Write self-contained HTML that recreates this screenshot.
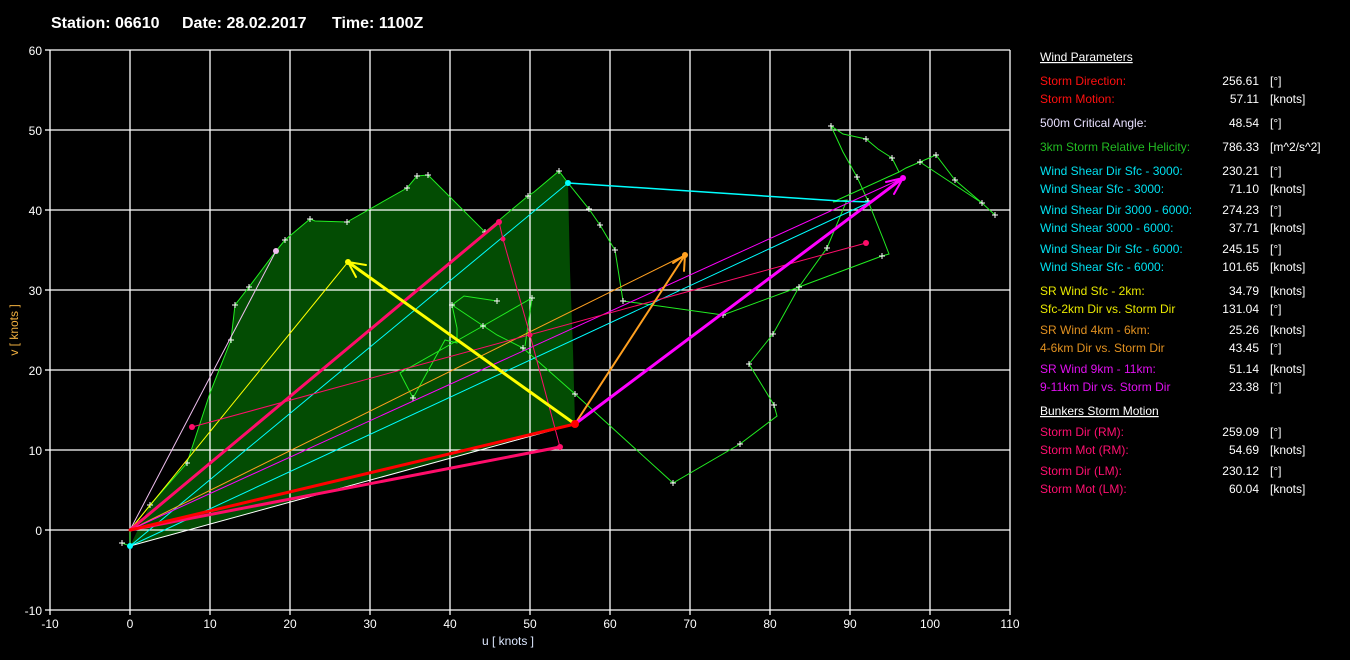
<!DOCTYPE html>
<html><head><meta charset="utf-8"><style>
html,body{margin:0;padding:0;background:#000;width:1350px;height:660px;overflow:hidden}
svg{display:block}
.lg{font-family:"Liberation Sans",sans-serif;font-size:12px}
</style></head><body>
<svg width="1350" height="660" viewBox="0 0 1350 660" xmlns="http://www.w3.org/2000/svg">
<rect width="1350" height="660" fill="#000"/>
<text x="51" y="28" fill="#fff" font-family="Liberation Sans,sans-serif" font-weight="bold" font-size="16">Station: 06610</text>
<text x="182" y="28" fill="#fff" font-family="Liberation Sans,sans-serif" font-weight="bold" font-size="16">Date: 28.02.2017</text>
<text x="332" y="28" fill="#fff" font-family="Liberation Sans,sans-serif" font-weight="bold" font-size="16">Time: 1100Z</text>

<!-- helicity fill -->
<polygon fill="#034c03" points="130,546 150,505 187,463 210,393 231,340 235,305 249,287 276,251 285,240 310,219 315,221 347,222 407,188 417,176 428,175 434,181 485,232 528,196 534,192 559,171 568,183 570,270 573,350 575,424"/>

<!-- grid -->
<g stroke="#fff" stroke-width="1.3">
<line x1="50" y1="50" x2="1010" y2="50"/><line x1="50" y1="130" x2="1010" y2="130"/><line x1="50" y1="210" x2="1010" y2="210"/><line x1="50" y1="290" x2="1010" y2="290"/><line x1="50" y1="370" x2="1010" y2="370"/><line x1="50" y1="450" x2="1010" y2="450"/><line x1="50" y1="530" x2="1010" y2="530"/><line x1="45" y1="610" x2="1010" y2="610"/>
<line x1="50" y1="50" x2="50" y2="615"/><line x1="130" y1="50" x2="130" y2="615"/><line x1="210" y1="50" x2="210" y2="615"/><line x1="290" y1="50" x2="290" y2="615"/><line x1="370" y1="50" x2="370" y2="615"/><line x1="450" y1="50" x2="450" y2="615"/><line x1="530" y1="50" x2="530" y2="615"/><line x1="610" y1="50" x2="610" y2="615"/><line x1="690" y1="50" x2="690" y2="615"/><line x1="770" y1="50" x2="770" y2="615"/><line x1="850" y1="50" x2="850" y2="615"/><line x1="930" y1="50" x2="930" y2="615"/><line x1="1010" y1="50" x2="1010" y2="615"/>
<line x1="45" y1="50" x2="50" y2="50"/><line x1="45" y1="130" x2="50" y2="130"/><line x1="45" y1="210" x2="50" y2="210"/><line x1="45" y1="290" x2="50" y2="290"/><line x1="45" y1="370" x2="50" y2="370"/><line x1="45" y1="450" x2="50" y2="450"/><line x1="45" y1="530" x2="50" y2="530"/>
</g>
<g fill="#fff" font-family="Liberation Sans,sans-serif" font-size="12" text-anchor="end">
<text x="42" y="55">60</text><text x="42" y="135">50</text><text x="42" y="215">40</text><text x="42" y="295">30</text><text x="42" y="375">20</text><text x="42" y="455">10</text><text x="42" y="535">0</text><text x="42" y="615">-10</text>
</g>
<g fill="#fff" font-family="Liberation Sans,sans-serif" font-size="12" text-anchor="middle">
<text x="50" y="628">-10</text><text x="130" y="628">0</text><text x="210" y="628">10</text><text x="290" y="628">20</text><text x="370" y="628">30</text><text x="450" y="628">40</text><text x="530" y="628">50</text><text x="610" y="628">60</text><text x="690" y="628">70</text><text x="770" y="628">80</text><text x="850" y="628">90</text><text x="930" y="628">100</text><text x="1010" y="628">110</text>
<text x="508" y="645" fill="#dde8ff">u  [ knots ]</text>
</g>
<text transform="translate(18,330) rotate(-90)" fill="#f0b040" font-family="Liberation Sans,sans-serif" font-size="12" text-anchor="middle">v  [ knots ]</text>

<!-- green hodograph -->
<g fill="none" stroke="#22ee22" stroke-width="1">
<polyline points="122,543 130,546 130,530 150,505 187,463 210,393 231,340 235,305 249,287 276,251 285,240 310,219 315,221 347,222 407,188 417,176 428,175 434,181 485,232 528,196 534,192 559,171 568,183 589,209 600,225 610,242 615,250 623,301 723,315 799,287 882,256 889,254 884,241 868,201 857,177 843,152 831,126 843,134 866,139 878,149 892,158 899,172 906,168 920,162 936,155 955,180 982,203 995,215"/>
<polyline points="920,162 982,203"/>
<polyline points="899,172 833,202 847,200 827,248 799,287 773,334 749,364 774,405 777,416 740,444 673,483 575,394 523,348 497,335 452,305 464,296 497,301"/>
<polyline points="452,305 457,328 457,343 445,340 413,398 400,373 483,326 532,298 525,346"/>
</g>
<g stroke="#fff" stroke-width="1" fill="none">
<path d="M119,543h6M122,540v6M147,505h6M150,502v6M184,463h6M187,460v6M228,340h6M231,337v6M232,305h6M235,302v6M246,287h6M249,284v6M282,240h6M285,237v6M307,219h6M310,216v6M344,222h6M347,219v6M404,188h6M407,185v6M414,176h6M417,173v6M425,175h6M428,172v6M482,232h6M485,229v6M525,196h6M528,193v6M556,171h6M559,168v6M586,209h6M589,206v6M597,225h6M600,222v6M612,250h6M615,247v6M620,301h6M623,298v6M720,315h6M723,312v6M796,287h6M799,284v6M879,256h6M882,253v6M865,201h6M868,198v6M854,177h6M857,174v6M828,126h6M831,123v6M863,139h6M866,136v6M889,158h6M892,155v6M917,162h6M920,159v6M933,155h6M936,152v6M952,180h6M955,177v6M979,203h6M982,200v6M992,215h6M995,212v6M770,334h6M773,331v6M746,364h6M749,361v6M771,405h6M774,402v6M737,444h6M740,441v6M670,483h6M673,480v6M572,394h6M575,391v6M520,348h6M523,345v6M449,305h6M452,302v6M494,301h6M497,298v6M410,398h6M413,395v6M480,326h6M483,323v6M529,298h6M532,295v6M824,248h6M827,245v6"/>
</g>

<!-- thin lines -->
<g fill="none" stroke-width="1">
<line x1="130" y1="546" x2="575" y2="424" stroke="#fff"/>
<line x1="130" y1="530" x2="276" y2="251" stroke="#f0c0f0"/>
<line x1="130" y1="530" x2="348" y2="262" stroke="#ffff00"/>
<line x1="130" y1="546" x2="568" y2="183" stroke="#00ffff"/>
<line x1="130" y1="546" x2="870" y2="202" stroke="#00ffff"/>
<polyline points="568,183 840,201 870,202" stroke="#00ffff" stroke-width="1.5"/>
<line x1="130" y1="530" x2="685" y2="255" stroke="#ffa020"/>
<line x1="130" y1="530" x2="903" y2="178" stroke="#ff00ff"/>
<line x1="192" y1="427" x2="866" y2="243" stroke="#ff0d6a"/>
<polyline points="499,222 503,239 530,335 560,447" stroke="#ff0d6a"/>
</g>
<!-- thick lines -->
<g fill="none" stroke-linecap="round">
<line x1="130" y1="530" x2="560" y2="447" stroke="#ff0d6a" stroke-width="3"/>
<line x1="130" y1="530" x2="499" y2="222" stroke="#ff0d6a" stroke-width="3"/>
<line x1="130" y1="530" x2="575" y2="424" stroke="#ff0000" stroke-width="3"/>
<line x1="575" y1="424" x2="348" y2="262" stroke="#ffff00" stroke-width="3"/>
<path d="M348,262 L366,265 M348,262 L356,277" stroke="#ffff00" stroke-width="2"/>
<line x1="575" y1="424" x2="685" y2="255" stroke="#ffa020" stroke-width="2"/>
<path d="M685,255 L673,263 M685,255 L684,271" stroke="#ffa020" stroke-width="2"/>
<line x1="575" y1="424" x2="903" y2="178" stroke="#ff00ff" stroke-width="3"/>
<path d="M903,178 L886,182 M903,178 L894,194" stroke="#ff00ff" stroke-width="2"/>
</g>
<g>
<circle cx="575" cy="424" r="4" fill="#ff0000"/>
<circle cx="560" cy="447" r="3" fill="#ff0d6a"/>
<circle cx="499" cy="222" r="3" fill="#ff0d6a"/>
<circle cx="503" cy="239" r="2.5" fill="#ff0d6a"/>
<circle cx="530" cy="335" r="2.5" fill="#ff0d6a"/>
<circle cx="192" cy="427" r="3" fill="#ff0d6a"/>
<circle cx="866" cy="243" r="3" fill="#ff0d6a"/>
<circle cx="276" cy="251" r="3" fill="#f0c0f0"/>
<circle cx="348" cy="262" r="3" fill="#ffff00"/>
<circle cx="685" cy="255" r="3" fill="#ffa020"/>
<circle cx="903" cy="178" r="3" fill="#ff00ff"/>
<circle cx="568" cy="183" r="3" fill="#00ffff"/>
<circle cx="130" cy="546" r="3" fill="#00ffff"/>
</g>

<!-- legend -->
<g class="lg">
<text x="1040" y="61" fill="#fff" text-decoration="underline">Wind Parameters</text>
<g fill="#ff1010"><text x="1040" y="85">Storm Direction:</text><text x="1040" y="103">Storm Motion:</text></g>
<text x="1040" y="127" fill="#e8e0ff">500m Critical Angle:</text>
<text x="1040" y="151" fill="#22bb22">3km Storm Relative Helicity:</text>
<g fill="#00e0f0"><text x="1040" y="175">Wind Shear Dir Sfc - 3000:</text><text x="1040" y="193">Wind Shear Sfc - 3000:</text><text x="1040" y="214">Wind Shear Dir 3000 - 6000:</text><text x="1040" y="232">Wind Shear 3000 - 6000:</text><text x="1040" y="253">Wind Shear Dir Sfc - 6000:</text><text x="1040" y="271">Wind Shear Sfc - 6000:</text></g>
<g fill="#e8e800"><text x="1040" y="295">SR Wind Sfc - 2km:</text><text x="1040" y="313">Sfc-2km Dir vs. Storm Dir</text></g>
<g fill="#e09020"><text x="1040" y="334">SR Wind 4km - 6km:</text><text x="1040" y="352">4-6km Dir vs. Storm Dir</text></g>
<g fill="#e010f0"><text x="1040" y="373">SR Wind 9km - 11km:</text><text x="1040" y="391">9-11km Dir vs. Storm Dir</text></g>
<text x="1040" y="415" fill="#fff" text-decoration="underline">Bunkers Storm Motion</text>
<g fill="#ff1070"><text x="1040" y="436">Storm Dir (RM):</text><text x="1040" y="454">Storm Mot (RM):</text><text x="1040" y="475">Storm Dir (LM):</text><text x="1040" y="493">Storm Mot (LM):</text></g>
<g fill="#fff" text-anchor="end">
<text x="1259" y="85">256.61</text><text x="1259" y="103">57.11</text><text x="1259" y="127">48.54</text><text x="1259" y="151">786.33</text><text x="1259" y="175">230.21</text><text x="1259" y="193">71.10</text><text x="1259" y="214">274.23</text><text x="1259" y="232">37.71</text><text x="1259" y="253">245.15</text><text x="1259" y="271">101.65</text><text x="1259" y="295">34.79</text><text x="1259" y="313">131.04</text><text x="1259" y="334">25.26</text><text x="1259" y="352">43.45</text><text x="1259" y="373">51.14</text><text x="1259" y="391">23.38</text><text x="1259" y="436">259.09</text><text x="1259" y="454">54.69</text><text x="1259" y="475">230.12</text><text x="1259" y="493">60.04</text>
</g>
<g fill="#fff">
<text x="1270" y="85">[°]</text><text x="1270" y="103">[knots]</text><text x="1270" y="127">[°]</text><text x="1270" y="151">[m^2/s^2]</text><text x="1270" y="175">[°]</text><text x="1270" y="193">[knots]</text><text x="1270" y="214">[°]</text><text x="1270" y="232">[knots]</text><text x="1270" y="253">[°]</text><text x="1270" y="271">[knots]</text><text x="1270" y="295">[knots]</text><text x="1270" y="313">[°]</text><text x="1270" y="334">[knots]</text><text x="1270" y="352">[°]</text><text x="1270" y="373">[knots]</text><text x="1270" y="391">[°]</text><text x="1270" y="436">[°]</text><text x="1270" y="454">[knots]</text><text x="1270" y="475">[°]</text><text x="1270" y="493">[knots]</text>
</g>
</g>
</svg>
</body></html>
